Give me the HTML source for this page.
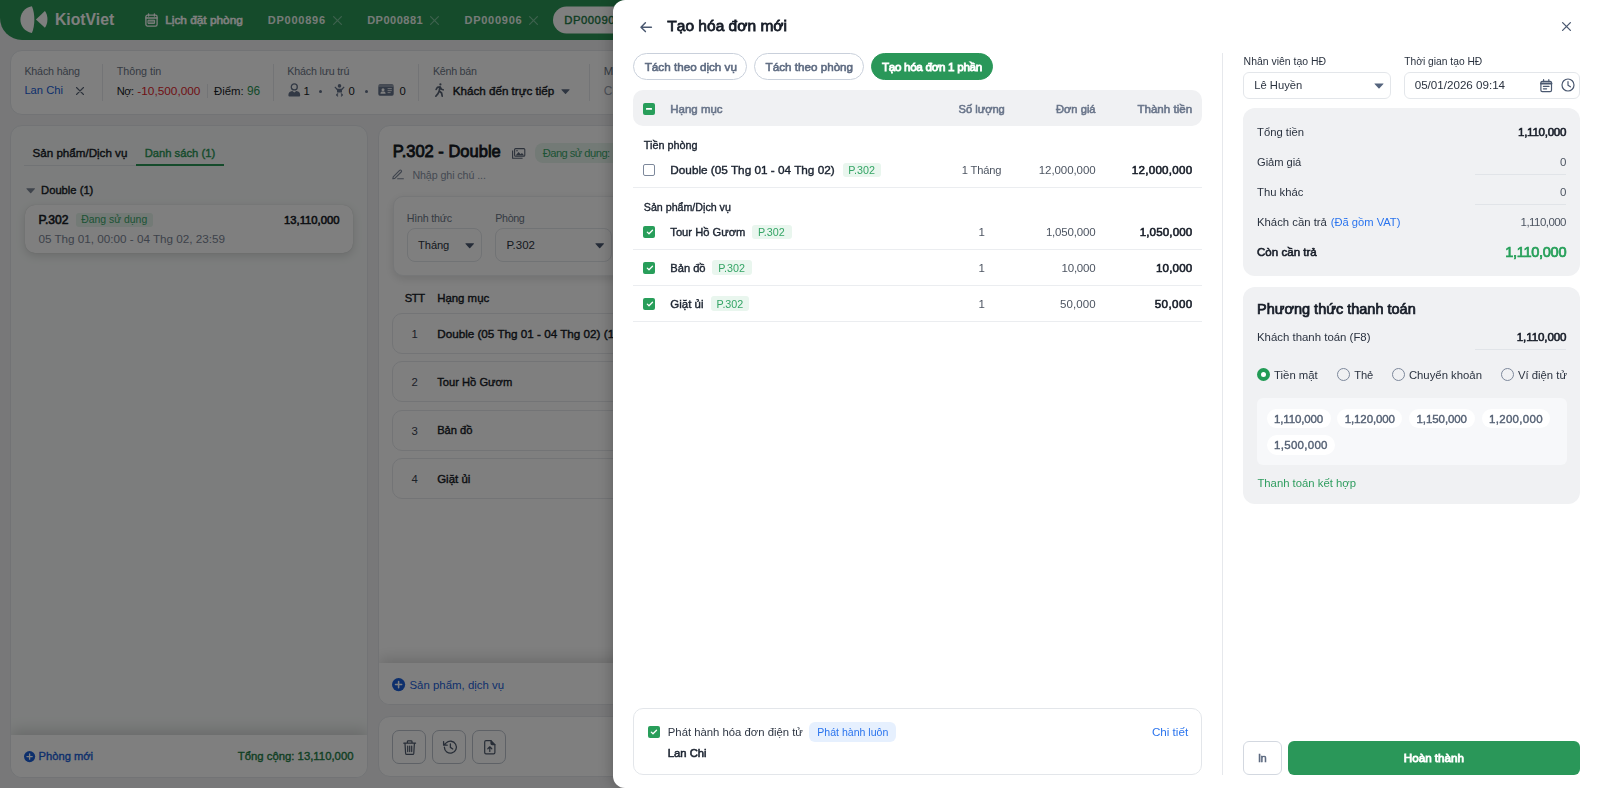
<!DOCTYPE html>
<html lang="vi">
<head>
<meta charset="utf-8">
<title>KiotViet - Tạo hóa đơn mới</title>
<style>
*{box-sizing:border-box;margin:0;padding:0}
html,body{width:1600px;height:788px;overflow:hidden}
body{font-family:"Liberation Sans",Arial,sans-serif;background:#f0f1f3;position:relative;color:#1b2330}
.t{position:absolute;white-space:nowrap;line-height:20px;height:20px}
.md{-webkit-text-stroke:0.034em currentColor}
.sb{-webkit-text-stroke:0.05em currentColor}
.xb{-webkit-text-stroke:0.07em currentColor}
.a{position:absolute}
#bg{position:absolute;left:0;top:0;width:1600px;height:788px;overflow:hidden}
#dim{position:absolute;left:0;top:0;width:1600px;height:788px;background:rgba(0,0,0,.5)}
#modal{position:absolute;left:613px;top:0;width:987px;height:788px;background:#fff;border-radius:12px 0 0 12px;box-shadow:-2px 0 13px rgba(0,0,0,.22)}
#mc{position:absolute;left:0;top:0;width:1600px;height:788px;will-change:transform}
.card{position:absolute;background:#fff;border:1px solid #e4e7eb;border-radius:12px}
.hl{position:absolute;height:1px;background:#ebedf0}
.vl{position:absolute;width:1px;background:#e6e8ec}
.pill{position:absolute;height:27px;border-radius:14px;border:1px solid #c9d0db;background:#fff}
.cb{position:absolute;width:12px;height:12px;border-radius:2px;background:#289e5a}
.cb.off{background:#fff;border:1px solid #7d889b}
.badge{position:absolute;background:#e9f6ee;border-radius:3px}
.box{position:absolute;background:#fff;border:1px solid #e3e6ea;border-radius:6px}
.gcard{position:absolute;background:#f0f1f3;border-radius:12px}
.ul{position:absolute;height:1px;background:#e1e4e8}
.radio{position:absolute;width:13.6px;height:13.6px;border-radius:50%;border:1px solid #7d889b;background:transparent}
.radio.on{border:4.3px solid #229b55;background:#fff}
.chip{position:absolute;height:19.6px;border-radius:10px;background:#fff}
.btn{position:absolute;border-radius:6px}
svg{position:absolute;overflow:visible}
</style>
</head>
<body>
<div id="bg">
<!-- top bar -->
<div class="a" style="left:0;top:0;width:1600px;height:40px;background:#2a9656;border-radius:0 0 0 22px"></div>
<svg style="left:19.6px;top:6.4px" width="28" height="28" viewBox="0 0 28 28"><path d="M11.9 0.2 C4.2 1.6 0.4 7.6 0.4 13.6 C0.4 19.6 4.2 25.6 11.9 27 C15 20 15.3 8 11.9 0.2Z" fill="#fff"/><path d="M15.9 13.6 L24.9 5.1 C28.3 9.5 28.3 17.4 24.9 21.8 Z" fill="#fff"/></svg>
<svg style="left:145.4px;top:13px" width="13" height="14" viewBox="0 0 13 14" fill="none" stroke="#fff" stroke-width="1.3" stroke-linejoin="round" stroke-linecap="round"><rect x="0.9" y="2.2" width="11.2" height="10.9" rx="1.6"/><path d="M3.6 0.8 V3 M9.4 0.8 V3"/><path d="M1 5 H12" stroke-width="1.6"/><rect x="3.4" y="7.2" width="6.2" height="3.2" stroke-width="1" fill="#fff" fill-opacity=".55"/></svg>
<svg style="left:332.6px;top:15.6px" width="9" height="9" viewBox="0 0 9 9" fill="none" stroke="#7cc29b" stroke-width="1.2" stroke-linecap="round"><path d="M0.6 0.6 L8.4 8.4 M8.4 0.6 L0.6 8.4"/></svg>
<svg style="left:430px;top:15.6px" width="9" height="9" viewBox="0 0 9 9" fill="none" stroke="#7cc29b" stroke-width="1.2" stroke-linecap="round"><path d="M0.6 0.6 L8.4 8.4 M8.4 0.6 L0.6 8.4"/></svg>
<svg style="left:529.4px;top:15.6px" width="9" height="9" viewBox="0 0 9 9" fill="none" stroke="#7cc29b" stroke-width="1.2" stroke-linecap="round"><path d="M0.6 0.6 L8.4 8.4 M8.4 0.6 L0.6 8.4"/></svg>
<svg style="left:553px;top:0" width="110" height="40"><rect x="0" y="6.5" width="110" height="27" rx="13.5" fill="#fff"/></svg>
<!-- customer card -->
<div class="card" style="left:10px;top:50px;width:1580px;height:65px"></div>
<svg style="left:75.8px;top:86.8px" width="8" height="8" viewBox="0 0 8 8" fill="none" stroke="#5a6577" stroke-width="1.1" stroke-linecap="round"><path d="M0.5 0.5 L7.5 7.5 M7.5 0.5 L0.5 7.5"/></svg>
<div class="vl" style="left:102.4px;top:64.2px;height:36.6px"></div>
<div class="vl" style="left:207px;top:83.6px;height:14.4px"></div>
<div class="vl" style="left:273.2px;top:64.2px;height:36.6px"></div>
<div class="vl" style="left:418px;top:64.2px;height:36.6px"></div>
<div class="vl" style="left:589px;top:64.2px;height:36.6px"></div>
<svg style="left:287.8px;top:83.4px" width="13" height="14" viewBox="0 0 13 14"><circle cx="6.3" cy="3.9" r="3" fill="none" stroke="#65738a" stroke-width="1.3"/><path d="M0.4 12.4 C0.4 8.6 3.4 8 4.4 8 L6.3 9.6 L8.2 8 C9.4 8 12.2 8.6 12.2 12.4 Q12.2 13.4 11.2 13.4 H1.4 Q0.4 13.4 0.4 12.4Z" fill="#65738a"/></svg>
<div class="a" style="left:318.6px;top:89.7px;width:3.2px;height:3.2px;border-radius:50%;background:#65738a"></div>
<svg style="left:333.6px;top:83.8px" width="11" height="13" viewBox="0 0 11 13" fill="#65738a"><circle cx="5.5" cy="1.9" r="1.8"/><path d="M0.4 3.2 L1.2 2.6 L3.6 4.8 H7.4 L9.8 2.6 L10.6 3.2 L8 6.2 V8.4 H3 V6.2 Z"/><path d="M3.2 9.2 L4.6 9.8 L3.4 11 L4.4 12 L3.6 12.8 L1.8 11 Z M7.8 9.2 L6.4 9.8 L7.6 11 L6.6 12 L7.4 12.8 L9.2 11 Z"/></svg>
<div class="a" style="left:365px;top:89.7px;width:3.2px;height:3.2px;border-radius:50%;background:#65738a"></div>
<svg style="left:378.2px;top:83.9px" width="16" height="12" viewBox="0 0 16 12"><rect x="0.3" y="0.3" width="15.4" height="11.4" rx="1.6" fill="#65738a"/><rect x="0.3" y="1.5" width="15.4" height="1" fill="#fff" opacity=".55"/><circle cx="5" cy="5.7" r="1.5" fill="#fff"/><path d="M2.4 9.8 C2.4 7.8 3.8 7.6 5 7.6 C6.2 7.6 7.6 7.8 7.6 9.8Z" fill="#fff"/><path d="M9.6 4.6 H13.8 M9.6 6.6 H13.8 M9.6 8.6 H12.6" stroke="#fff" stroke-width="0.8"/></svg>
<svg style="left:434.8px;top:83.4px" width="9" height="14" viewBox="0 0 9 14" fill="none" stroke="#5a6577" stroke-width="1.7" stroke-linecap="round" stroke-linejoin="round"><circle cx="5.4" cy="1.4" r="1.1" fill="#5a6577" stroke="none"/><path d="M1.2 6.4 L2.4 4.4 L5 3.8 L4.2 8 L6.6 10 L7.2 13.2 M5 3.8 L6.4 6.2 L8.2 6.8 M4.2 8 L3 10.6 L0.8 13.2"/></svg>
<svg style="left:561.4px;top:89.2px" width="9" height="5.4" viewBox="0 0 10 6"><path d="M0.8 0.4 H9.2 Q9.9 0.4 9.4 1 L5.5 5.3 Q5 5.8 4.5 5.3 L0.6 1 Q0.1 0.4 0.8 0.4Z" fill="#5d6b82"/></svg>
<!-- left panel -->
<div class="card" style="left:10px;top:125px;width:358px;height:653px;background:#f8fbfa;overflow:hidden">
  <div class="a" style="left:0;top:609px;width:356px;height:44px;background:#fff;box-shadow:0 -5px 14px rgba(0,0,0,.15)"></div>
</div>
<div class="hl" style="left:24.4px;top:165px;width:199.6px;background:#e3e6ea"></div>
<div class="a" style="left:136px;top:164.4px;width:88px;height:1.8px;background:#2a9656"></div>
<svg style="left:26.4px;top:188px" width="9.4" height="5.6" viewBox="0 0 10 6"><path d="M0.8 0.4 H9.2 Q9.9 0.4 9.4 1 L5.5 5.3 Q5 5.8 4.5 5.3 L0.6 1 Q0.1 0.4 0.8 0.4Z" fill="#7e8898"/></svg>
<div class="a" style="left:24.8px;top:205.2px;width:328.6px;height:47.6px;background:#fff;border-radius:10px;box-shadow:0 3px 10px rgba(0,0,0,.14),0 0 1px rgba(0,0,0,.18)"></div>
<div class="a" style="left:76px;top:212.8px;width:76.8px;height:13.8px;background:#e6f4ec;border-radius:3px"></div>
<svg style="left:24px;top:751px" width="11.2" height="11.2" viewBox="0 0 12 12"><circle cx="6" cy="6" r="6" fill="#1b5fd9"/><path d="M6 3.2 V8.8 M3.2 6 H8.8" stroke="#fff" stroke-width="1.4" stroke-linecap="round"/></svg>
<!-- main panel -->
<div class="card" style="left:378px;top:125px;width:1212px;height:580px;overflow:hidden">
  <div class="a" style="left:0;top:537px;width:1211px;height:43px;background:#fff;box-shadow:0 -5px 14px rgba(0,0,0,.15)"></div>
</div>
<svg style="left:511.6px;top:147.8px" width="13.4" height="10.8" viewBox="0 0 13.4 10.8" fill="none" stroke="#5a6577" stroke-width="1.1" stroke-linejoin="round"><path d="M0.6 2.4 V10.2 H10.6"/><rect x="2.6" y="0.6" width="10.2" height="7.6" rx="1"/><path d="M3.6 7.6 L6.6 4 L8.6 6.2 L10 5 L12.2 7.6Z" fill="#5a6577" stroke="none"/><circle cx="5" cy="2.8" r=".8" fill="#5a6577" stroke="none"/></svg>
<div class="a" style="left:535.2px;top:143.2px;width:160px;height:20px;background:#e6f4ec;border-radius:8px"></div>
<svg style="left:392.2px;top:169px" width="12" height="10.4" viewBox="0 0 12 10.4" fill="none" stroke="#7d889b" stroke-width="1.1" stroke-linecap="round" stroke-linejoin="round"><path d="M1.2 7.8 L7.6 1.4 Q8.4 0.6 9.2 1.4 Q10 2.2 9.2 3 L2.8 9.4 L0.8 9.8 Z"/><path d="M5.6 9.8 H11.4"/></svg>
<div class="a" style="left:393px;top:196px;width:1183px;height:80px;background:#fff;border-radius:10px;border:1px solid #eceef1;box-shadow:0 3px 10px rgba(0,0,0,.12)"></div>
<div class="box" style="left:406.6px;top:228.4px;width:75px;height:33.2px;border-radius:8px"></div>
<svg style="left:465.2px;top:243px" width="9.4" height="5.6" viewBox="0 0 10 6"><path d="M0.8 0.4 H9.2 Q9.9 0.4 9.4 1 L5.5 5.3 Q5 5.8 4.5 5.3 L0.6 1 Q0.1 0.4 0.8 0.4Z" fill="#4a5870"/></svg>
<div class="box" style="left:495.2px;top:228.4px;width:116.6px;height:33.2px;border-radius:8px"></div>
<svg style="left:595.2px;top:243px" width="9.4" height="5.6" viewBox="0 0 10 6"><path d="M0.8 0.4 H9.2 Q9.9 0.4 9.4 1 L5.5 5.3 Q5 5.8 4.5 5.3 L0.6 1 Q0.1 0.4 0.8 0.4Z" fill="#4a5870"/></svg>
<div class="a" style="left:392.4px;top:313px;width:1183px;height:41.2px;background:#fff;border-radius:10px;border:1px solid #e6e8ec"></div>
<div class="a" style="left:392.4px;top:361.2px;width:1183px;height:41.2px;background:#fff;border-radius:10px;border:1px solid #e6e8ec"></div>
<div class="a" style="left:392.4px;top:409.5px;width:1183px;height:41.2px;background:#fff;border-radius:10px;border:1px solid #e6e8ec"></div>
<div class="a" style="left:392.4px;top:457.8px;width:1183px;height:41.2px;background:#fff;border-radius:10px;border:1px solid #e6e8ec"></div>
<svg style="left:392.4px;top:678.4px" width="13.2" height="13.2" viewBox="0 0 12 12"><circle cx="6" cy="6" r="6" fill="#1b5fd9"/><path d="M6 3.2 V8.8 M3.2 6 H8.8" stroke="#fff" stroke-width="1.4" stroke-linecap="round"/></svg>
<!-- bottom toolbar -->
<div class="card" style="left:378px;top:716px;width:1212px;height:61px"></div>
<div class="box" style="left:392.2px;top:730.4px;width:33.4px;height:33.2px;border-radius:7px;border-color:#bcc3cd"></div>
<div class="box" style="left:432.2px;top:730.4px;width:33.4px;height:33.2px;border-radius:7px;border-color:#bcc3cd"></div>
<div class="box" style="left:472.3px;top:730.4px;width:33.4px;height:33.2px;border-radius:7px;border-color:#bcc3cd"></div>
<svg style="left:403px;top:740.2px" width="13.4" height="15.2" viewBox="0 0 13.4 15.2" fill="none" stroke="#4f5b6e" stroke-width="1.2" stroke-linecap="round" stroke-linejoin="round"><path d="M0.8 3.2 H12.6 M4.4 3 V1.6 Q4.4 0.8 5.2 0.8 H8.2 Q9 0.8 9 1.6 V3 M2 3.4 L2.6 13.4 Q2.7 14.4 3.7 14.4 H9.7 Q10.7 14.4 10.8 13.4 L11.4 3.4 M4.7 6 V11.6 M6.7 6 V11.6 M8.7 6 V11.6"/></svg>
<svg style="left:441.8px;top:740.4px" width="15.4" height="14.4" viewBox="0 0 15.4 14.4" fill="none" stroke="#4f5b6e" stroke-width="1.3" stroke-linecap="round" stroke-linejoin="round"><path d="M2.4 7.2 A6 6 0 1 0 4.2 2.9 L2 5 M1.6 1.6 V5.2 H5.2"/><path d="M8.4 4 V7.4 L10.8 9"/></svg>
<svg style="left:484px;top:740.2px" width="11.6" height="14.6" viewBox="0 0 11.6 14.6" fill="none" stroke="#4f5b6e" stroke-width="1.2" stroke-linecap="round" stroke-linejoin="round"><path d="M7 0.7 H2 Q0.7 0.7 0.7 2 V12.6 Q0.7 13.9 2 13.9 H9.6 Q10.9 13.9 10.9 12.6 V4.6 Z"/><path d="M7 0.7 V3.4 Q7 4.6 8.2 4.6 H10.9" fill="#4f5b6e"/><path d="M5.8 11.4 V7 M3.8 8.8 L5.8 6.8 L7.8 8.8"/></svg>

<span class="t" style="left:55.0px;top:10.3px;font-size:15.75px;font-weight:700;color:#ffffff;">KiotViet</span>
<span class="t sb" style="left:165.2px;top:10.0px;font-size:11.84px;color:#ffffff;">Lịch đặt phòng</span>
<span class="t" style="left:267.8px;top:10.4px;font-size:11px;font-weight:700;color:#edf7f1;letter-spacing:0.76px;">DP000896</span>
<span class="t" style="left:367.2px;top:10.4px;font-size:11px;font-weight:700;color:#edf7f1;letter-spacing:0.49px;">DP000881</span>
<span class="t" style="left:464.5px;top:10.4px;font-size:11px;font-weight:700;color:#edf7f1;letter-spacing:0.74px;">DP000906</span>
<span class="t md" style="left:564.2px;top:10.4px;font-size:11.3px;color:#1d7a45;letter-spacing:0.54px;">DP000907</span>
<span class="t" style="left:24.4px;top:60.9px;font-size:10.7px;color:#6b7686;letter-spacing:-0.17px;">Khách hàng</span>
<span class="t" style="left:24.4px;top:80.2px;font-size:11.2px;color:#1b5fd9;">Lan Chi</span>
<span class="t" style="left:116.8px;top:60.9px;font-size:10.7px;color:#6b7686;letter-spacing:-0.02px;">Thông tin</span>
<span class="t" style="left:116.8px;top:81.0px;font-size:11.16px;color:#171c26;letter-spacing:-0.64px;">Nợ:</span>
<span class="t" style="left:137.3px;top:81.0px;font-size:11.84px;color:#e0242c;">-10,500,000</span>
<span class="t" style="left:214.0px;top:81.0px;font-size:11.37px;color:#171c26;">Điểm:</span>
<span class="t" style="left:247.0px;top:81.0px;font-size:11.86px;color:#2a9656;">96</span>
<span class="t" style="left:287.3px;top:60.9px;font-size:10.7px;color:#6b7686;letter-spacing:-0.17px;">Khách lưu trú</span>
<span class="t" style="left:303.5px;top:81.0px;font-size:11.3px;color:#171c26;">1</span>
<span class="t" style="left:348.4px;top:81.0px;font-size:11.3px;color:#171c26;">0</span>
<span class="t" style="left:399.4px;top:81.0px;font-size:11.3px;color:#171c26;">0</span>
<span class="t" style="left:433.0px;top:60.9px;font-size:10.7px;color:#6b7686;letter-spacing:-0.27px;">Kênh bán</span>
<span class="t md" style="left:452.8px;top:81.0px;font-size:11.63px;color:#171c26;">Khách đến trực tiếp</span>
<span class="t" style="left:603.8px;top:60.9px;font-size:11.5px;color:#6b7686;">Mã đặt phòng</span>
<span class="t" style="left:603.8px;top:80.6px;font-size:12px;color:#9aa3b0;">Chưa có</span>
<span class="t md" style="left:32.5px;top:143.0px;font-size:11.61px;color:#171c26;">Sản phẩm/Dịch vụ</span>
<span class="t md" style="left:144.7px;top:143.0px;font-size:11.22px;color:#2a9656;">Danh sách (1)</span>
<span class="t md" style="left:41.1px;top:180.4px;font-size:11.2px;color:#171c26;">Double (1)</span>
<span class="t sb" style="left:38.4px;top:209.6px;font-size:12.08px;color:#171c26;">P.302</span>
<span class="t" style="left:81.2px;top:209.6px;font-size:10.41px;color:#3aa66a;">Đang sử dụng</span>
<span class="t sb" style="left:284.0px;top:210.0px;font-size:11.28px;color:#171c26;">13,110,000</span>
<span class="t" style="left:38.4px;top:228.8px;font-size:11.69px;color:#7a8494;">05 Thg 01, 00:00 - 04 Thg 02, 23:59</span>
<span class="t md" style="left:38.6px;top:746.1px;font-size:11.16px;color:#1b5fd9;">Phòng mới</span>
<span class="t md" style="left:237.8px;top:746.1px;font-size:11.34px;color:#1f7f47;">Tổng cộng: 13,110,000</span>
<span class="t sb" style="left:392.8px;top:141.2px;font-size:16.51px;color:#141a24;">P.302 - Double</span>
<span class="t" style="left:542.7px;top:143.2px;font-size:11.16px;color:#3aa66a;letter-spacing:-0.53px;">Đang sử dụng:</span>
<span class="t" style="left:614.0px;top:143.2px;font-size:12px;color:#3aa66a;">30 ngày</span>
<span class="t" style="left:412.4px;top:165.0px;font-size:10.7px;color:#8a94a6;letter-spacing:-0.09px;">Nhập ghi chú ...</span>
<span class="t" style="left:406.7px;top:208.0px;font-size:10.7px;color:#6b7686;letter-spacing:-0.20px;">Hình thức</span>
<span class="t" style="left:495.3px;top:208.0px;font-size:10.7px;color:#6b7686;letter-spacing:-0.36px;">Phòng</span>
<span class="t" style="left:418.1px;top:235.0px;font-size:11.16px;color:#2b3340;letter-spacing:-0.11px;">Tháng</span>
<span class="t" style="left:506.4px;top:235.0px;font-size:11.47px;color:#2b3340;">P.302</span>
<span class="t md" style="left:404.7px;top:288.0px;font-size:11.16px;color:#171c26;letter-spacing:-0.39px;">STT</span>
<span class="t md" style="left:437.2px;top:288.0px;font-size:11.41px;color:#171c26;">Hạng mục</span>
<span class="t" style="left:411.6px;top:324.1px;font-size:11.3px;color:#3a4250;">1</span>
<span class="t md" style="left:437.2px;top:323.8px;font-size:11.69px;color:#171c26;">Double (05 Thg 01 - 04 Thg 02) (1 Tháng)</span>
<span class="t" style="left:411.6px;top:372.3px;font-size:11.3px;color:#3a4250;">2</span>
<span class="t md" style="left:437.2px;top:372.0px;font-size:11.18px;color:#171c26;">Tour Hồ Gươm</span>
<span class="t" style="left:411.6px;top:420.7px;font-size:11.3px;color:#3a4250;">3</span>
<span class="t md" style="left:437.2px;top:420.4px;font-size:11.16px;color:#171c26;letter-spacing:-0.02px;">Bản đồ</span>
<span class="t" style="left:411.6px;top:468.9px;font-size:11.3px;color:#3a4250;">4</span>
<span class="t md" style="left:437.2px;top:468.6px;font-size:11.49px;color:#171c26;">Giặt ủi</span>
<span class="t" style="left:409.5px;top:675.0px;font-size:11.43px;color:#1b5fd9;">Sản phẩm, dịch vụ</span>
</div>
<div id="dim"></div>
<div id="modal"></div>
<div id="mc">
<!-- header icons -->
<svg style="left:640.4px;top:21.6px" width="12" height="10.4" viewBox="0 0 12 10.4" fill="none" stroke="#4a5870" stroke-width="1.5" stroke-linecap="round" stroke-linejoin="round"><path d="M5.4 0.8 L1 5.2 L5.4 9.6 M1.2 5.2 H11.4"/></svg>
<svg style="left:1562.2px;top:22.2px" width="9" height="9" viewBox="0 0 9 9" fill="none" stroke="#4a5870" stroke-width="1.3" stroke-linecap="round"><path d="M0.6 0.6 L8.4 8.4 M8.4 0.6 L0.6 8.4"/></svg>
<!-- pills -->
<div class="pill" style="left:633px;top:53.2px;width:114.2px"></div>
<div class="pill" style="left:754px;top:53.2px;width:110px"></div>
<div class="pill" style="left:871px;top:53.2px;width:122.2px;background:#2a9759;border-color:#2a9759"></div>
<!-- table header -->
<div class="a" style="left:633px;top:90px;width:569.4px;height:35.6px;background:#f0f1f3;border-radius:10px"></div>
<div class="cb" style="left:643.4px;top:102.8px"><svg style="left:3px;top:5.1px" width="6" height="2"><rect width="6" height="1.8" rx=".5" fill="#fff"/></svg></div>
<!-- rows -->
<div class="cb off" style="left:643.2px;top:164px"></div>
<div class="badge" style="left:842.6px;top:162.7px;width:38.2px;height:14.6px"></div>
<div class="hl" style="left:633px;top:187.2px;width:569.4px"></div>
<div class="cb" style="left:643.2px;top:226.1px"><svg style="left:2.4px;top:3.2px" width="8" height="6" viewBox="0 0 8 6" fill="none" stroke="#fff" stroke-width="1.3" stroke-linecap="round" stroke-linejoin="round"><path d="M1.3 3.1 L3 4.7 L6.5 1.2"/></svg></div>
<div class="badge" style="left:752.3px;top:224.6px;width:39.3px;height:14.6px"></div>
<div class="hl" style="left:633px;top:248.8px;width:569.4px"></div>
<div class="cb" style="left:643.2px;top:261.9px"><svg style="left:2.4px;top:3.2px" width="8" height="6" viewBox="0 0 8 6" fill="none" stroke="#fff" stroke-width="1.3" stroke-linecap="round" stroke-linejoin="round"><path d="M1.3 3.1 L3 4.7 L6.5 1.2"/></svg></div>
<div class="badge" style="left:712.4px;top:260.4px;width:39.2px;height:14.6px"></div>
<div class="hl" style="left:633px;top:284.8px;width:569.4px"></div>
<div class="cb" style="left:643.2px;top:297.8px"><svg style="left:2.4px;top:3.2px" width="8" height="6" viewBox="0 0 8 6" fill="none" stroke="#fff" stroke-width="1.3" stroke-linecap="round" stroke-linejoin="round"><path d="M1.3 3.1 L3 4.7 L6.5 1.2"/></svg></div>
<div class="badge" style="left:710.9px;top:296.3px;width:38.2px;height:14.6px"></div>
<div class="hl" style="left:633px;top:320.7px;width:569.4px"></div>
<!-- e-invoice box -->
<div class="a" style="left:633px;top:708px;width:569.4px;height:67px;border:1px solid #e3e6ea;border-radius:10px;background:#fff"></div>
<div class="cb" style="left:647.5px;top:726.3px"><svg style="left:2.4px;top:3.2px" width="8" height="6" viewBox="0 0 8 6" fill="none" stroke="#fff" stroke-width="1.3" stroke-linecap="round" stroke-linejoin="round"><path d="M1.3 3.1 L3 4.7 L6.5 1.2"/></svg></div>
<div class="a" style="left:809.1px;top:722px;width:86.7px;height:19.8px;background:#e6f0fe;border-radius:6px"></div>
<!-- divider -->
<div class="vl" style="left:1222px;top:53px;height:722px"></div>
<!-- right column: selects -->
<div class="box" style="left:1243.1px;top:72px;width:147.6px;height:26.6px"></div>
<svg style="left:1373.8px;top:83.2px" width="10" height="6" viewBox="0 0 10 6"><path d="M0.8 0.4 H9.2 Q9.9 0.4 9.4 1 L5.5 5.3 Q5 5.8 4.5 5.3 L0.6 1 Q0.1 0.4 0.8 0.4Z" fill="#55647d"/></svg>
<div class="box" style="left:1404.3px;top:72px;width:175.8px;height:26.6px"></div>
<svg style="left:1539.6px;top:78.6px" width="13" height="13" viewBox="0 0 13 13" fill="none" stroke="#4a5870" stroke-width="1.2" stroke-linejoin="round" stroke-linecap="round"><rect x="0.9" y="2.4" width="10.6" height="10.2" rx="1.4"/><path d="M1 4.4 H11.4" stroke-width="2"/><path d="M3.6 0.7 V2.6 M8.8 0.7 V2.6 M3.4 7.4 H9 M3.4 9.8 H6.6"/></svg>
<svg style="left:1561.4px;top:78.3px" width="14" height="14" viewBox="0 0 14 14" fill="none" stroke="#4a5870" stroke-width="1.2" stroke-linecap="round" stroke-linejoin="round"><circle cx="7" cy="7" r="6"/><path d="M7 3.6 V7.2 L9.4 8.8"/></svg>
<!-- summary card -->
<div class="gcard" style="left:1243.1px;top:108px;width:337px;height:168px"></div>
<div class="ul" style="left:1475.4px;top:174.2px;width:91.1px"></div>
<div class="ul" style="left:1475.4px;top:204.1px;width:91.1px"></div>
<!-- payment card -->
<div class="gcard" style="left:1243.1px;top:287.1px;width:337px;height:216.6px"></div>
<div class="ul" style="left:1475.4px;top:349.4px;width:91.1px"></div>
<div class="radio on" style="left:1256.5px;top:367.7px"></div>
<div class="radio" style="left:1336.5px;top:367.7px"></div>
<div class="radio" style="left:1391.6px;top:367.7px"></div>
<div class="radio" style="left:1500.8px;top:367.7px"></div>
<div class="a" style="left:1256.6px;top:398.3px;width:310.4px;height:66.8px;background:#f7f8fa;border-radius:6px"></div>
<div class="chip" style="left:1266.5px;top:408.7px;width:64.2px"></div>
<div class="chip" style="left:1337.3px;top:408.7px;width:65px"></div>
<div class="chip" style="left:1408.9px;top:408.7px;width:66px"></div>
<div class="chip" style="left:1481.5px;top:408.7px;width:68.5px"></div>
<div class="chip" style="left:1266.5px;top:435.2px;width:68.5px"></div>
<!-- buttons -->
<div class="btn" style="left:1243.1px;top:741px;width:38.6px;height:34px;background:#fff;border:1px solid #d3d8e0"></div>
<div class="btn" style="left:1288.3px;top:741px;width:291.8px;height:34px;background:#2a9759"></div>

<span class="t sb" style="left:667.3px;top:16.3px;font-size:15.54px;color:#161c27;">Tạo hóa đơn mới</span>
<span class="t sb" style="left:644.7px;top:56.7px;font-size:11.69px;color:#5d6a80;">Tách theo dịch vụ</span>
<span class="t sb" style="left:765.6px;top:56.7px;font-size:11.67px;color:#5d6a80;">Tách theo phòng</span>
<span class="t xb" style="left:881.9px;top:56.7px;font-size:11.7px;color:#ffffff;letter-spacing:-0.32px;">Tạo hóa đơn 1 phần</span>
<span class="t sb" style="left:670.3px;top:99.0px;font-size:11.47px;color:#69758a;">Hạng mục</span>
<span class="t sb" style="left:958.6px;top:99.0px;font-size:11.16px;color:#69758a;letter-spacing:-0.03px;">Số lượng</span>
<span class="t sb" style="left:1056.0px;top:99.0px;font-size:11.16px;color:#69758a;">Đơn giá</span>
<span class="t sb" style="left:1137.4px;top:99.0px;font-size:11.59px;color:#69758a;">Thành tiền</span>
<span class="t md" style="left:643.8px;top:134.9px;font-size:10.83px;color:#1b2330;">Tiền phòng</span>
<span class="t md" style="left:670.3px;top:160.4px;font-size:11.77px;color:#1b2330;">Double (05 Thg 01 - 04 Thg 02)</span>
<span class="t" style="left:848.2px;top:160.0px;font-size:10.75px;color:#35a566;">P.302</span>
<span class="t" style="left:961.8px;top:160.3px;font-size:11.15px;color:#4d5562;letter-spacing:-0.16px;">1 Tháng</span>
<span class="t" style="left:1038.8px;top:160.3px;font-size:11.5px;color:#4d5562;letter-spacing:-0.08px;">12,000,000</span>
<span class="t sb" style="left:1131.8px;top:160.3px;font-size:11.6px;color:#161c27;letter-spacing:0.26px;">12,000,000</span>
<span class="t md" style="left:643.8px;top:196.8px;font-size:10.67px;color:#1b2330;">Sản phẩm/Dịch vụ</span>
<span class="t md" style="left:670.3px;top:221.8px;font-size:11.18px;color:#1b2330;">Tour Hồ Gươm</span>
<span class="t" style="left:758.0px;top:221.8px;font-size:10.75px;color:#35a566;">P.302</span>
<span class="t" style="left:978.4px;top:221.8px;font-size:11.5px;color:#4d5562;">1</span>
<span class="t" style="left:1045.9px;top:221.8px;font-size:11.5px;color:#4d5562;letter-spacing:-0.18px;">1,050,000</span>
<span class="t sb" style="left:1139.7px;top:221.8px;font-size:11.6px;color:#161c27;letter-spacing:0.12px;">1,050,000</span>
<span class="t md" style="left:670.3px;top:257.6px;font-size:11.16px;color:#1b2330;letter-spacing:-0.02px;">Bản đồ</span>
<span class="t" style="left:718.2px;top:257.6px;font-size:10.75px;color:#35a566;">P.302</span>
<span class="t" style="left:978.4px;top:257.6px;font-size:11.5px;color:#4d5562;">1</span>
<span class="t" style="left:1061.6px;top:257.6px;font-size:11.5px;color:#4d5562;letter-spacing:-0.24px;">10,000</span>
<span class="t sb" style="left:1155.9px;top:257.6px;font-size:11.6px;color:#161c27;letter-spacing:0.17px;">10,000</span>
<span class="t md" style="left:670.3px;top:293.5px;font-size:11.49px;color:#1b2330;">Giặt ủi</span>
<span class="t" style="left:716.6px;top:293.5px;font-size:10.75px;color:#35a566;">P.302</span>
<span class="t" style="left:978.4px;top:293.5px;font-size:11.5px;color:#4d5562;">1</span>
<span class="t" style="left:1060.1px;top:293.5px;font-size:11.5px;color:#4d5562;letter-spacing:0.06px;">50,000</span>
<span class="t sb" style="left:1154.7px;top:293.5px;font-size:11.6px;color:#161c27;letter-spacing:0.41px;">50,000</span>
<span class="t" style="left:667.8px;top:722.0px;font-size:11.32px;color:#2f3744;">Phát hành hóa đơn điện tử</span>
<span class="t" style="left:817.3px;top:721.8px;font-size:10.55px;color:#2a74ee;">Phát hành luôn</span>
<span class="t" style="left:1151.9px;top:722.0px;font-size:11.66px;color:#2a74ee;">Chi tiết</span>
<span class="t sb" style="left:667.8px;top:743.0px;font-size:11.25px;color:#1b2330;">Lan Chi</span>
<span class="t" style="left:1243.6px;top:52.2px;font-size:10.45px;color:#2b3340;">Nhân viên tạo HĐ</span>
<span class="t" style="left:1404.3px;top:52.2px;font-size:10.25px;color:#2b3340;">Thời gian tạo HĐ</span>
<span class="t" style="left:1254.3px;top:75.3px;font-size:11.21px;color:#2b3340;">Lê Huyền</span>
<span class="t" style="left:1414.7px;top:75.3px;font-size:11.61px;color:#2b3340;">05/01/2026 09:14</span>
<span class="t" style="left:1257.0px;top:122.0px;font-size:11.29px;color:#2b3340;">Tổng tiền</span>
<span class="t sb" style="left:1518.0px;top:122.0px;font-size:11.6px;color:#161c27;letter-spacing:-0.28px;">1,110,000</span>
<span class="t" style="left:1257.0px;top:152.0px;font-size:11.16px;color:#2b3340;letter-spacing:-0.05px;">Giảm giá</span>
<span class="t" style="left:1560.1px;top:152.0px;font-size:11.5px;color:#4d5562;">0</span>
<span class="t" style="left:1257.0px;top:182.0px;font-size:11.28px;color:#2b3340;">Thu khác</span>
<span class="t" style="left:1560.1px;top:182.0px;font-size:11.5px;color:#4d5562;">0</span>
<span class="t" style="left:1257.0px;top:212.0px;font-size:11.34px;color:#2b3340;">Khách cần trả</span>
<span class="t" style="left:1330.7px;top:212.0px;font-size:11.18px;color:#2a74ee;">(Đã gồm VAT)</span>
<span class="t" style="left:1520.6px;top:212.0px;font-size:11.5px;color:#4d5562;letter-spacing:-0.55px;">1,110,000</span>
<span class="t sb" style="left:1257.0px;top:242.0px;font-size:11.57px;color:#161c27;">Còn cần trả</span>
<span class="t sb" style="left:1505.3px;top:242.0px;font-size:14.6px;color:#27a05a;letter-spacing:-0.33px;">1,110,000</span>
<span class="t sb" style="left:1257.0px;top:299.1px;font-size:14.5px;color:#161c27;">Phương thức thanh toán</span>
<span class="t" style="left:1257.0px;top:327.0px;font-size:11.41px;color:#2b3340;">Khách thanh toán (F8)</span>
<span class="t sb" style="left:1516.8px;top:327.0px;font-size:11.6px;color:#161c27;letter-spacing:-0.13px;">1,110,000</span>
<span class="t" style="left:1274.1px;top:364.6px;font-size:11.34px;color:#2b3340;">Tiền mặt</span>
<span class="t" style="left:1354.3px;top:364.6px;font-size:11.16px;color:#2b3340;letter-spacing:-0.22px;">Thẻ</span>
<span class="t" style="left:1408.9px;top:364.6px;font-size:11.33px;color:#2b3340;">Chuyển khoản</span>
<span class="t" style="left:1518.0px;top:364.6px;font-size:11.29px;color:#2b3340;">Ví điện tử</span>
<span class="t md" style="left:1274.1px;top:408.8px;font-size:11.5px;color:#556174;letter-spacing:-0.16px;">1,110,000</span>
<span class="t md" style="left:1344.7px;top:408.8px;font-size:11.5px;color:#556174;letter-spacing:-0.11px;">1,120,000</span>
<span class="t md" style="left:1416.5px;top:408.8px;font-size:11.5px;color:#556174;letter-spacing:-0.08px;">1,150,000</span>
<span class="t md" style="left:1489.0px;top:408.8px;font-size:11.5px;color:#556174;letter-spacing:0.30px;">1,200,000</span>
<span class="t md" style="left:1274.1px;top:435.4px;font-size:11.5px;color:#556174;letter-spacing:0.28px;">1,500,000</span>
<span class="t" style="left:1257.4px;top:473.2px;font-size:11.32px;color:#2f9d5f;">Thanh toán kết hợp</span>
<span class="t sb" style="left:1257.9px;top:748.2px;font-size:11.16px;color:#5d6a80;letter-spacing:-0.41px;">In</span>
<span class="t xb" style="left:1403.8px;top:748.2px;font-size:11.7px;color:#ffffff;letter-spacing:-0.03px;">Hoàn thành</span>
</div>
</body>
</html>
